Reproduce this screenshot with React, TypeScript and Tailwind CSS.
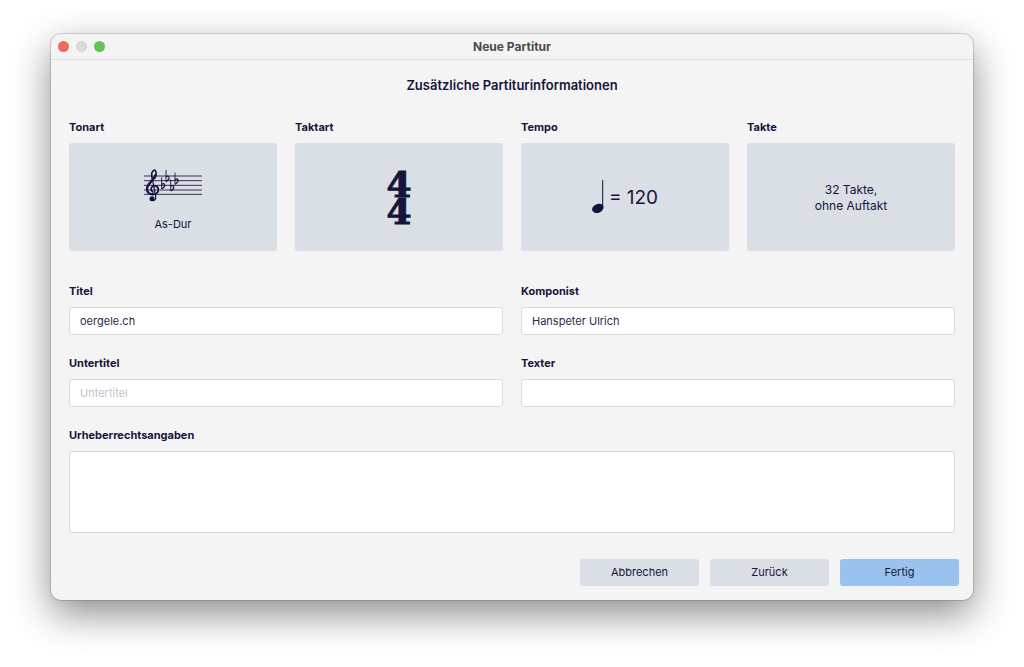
import type { ReactNode } from "react";

function KeySignature() {
  return (
    <svg viewBox="42 42 174 99" className="w-[58px] h-[33px]" aria-hidden="true">
      <g stroke="#26264a" strokeWidth="2.8">
        {[63, 77, 91, 105, 118].map((y) => (
          <line key={y} x1="42" x2="216" y1={y} y2={y} />
        ))}
      </g>
      <g fill="none" stroke="#12123a" strokeLinecap="round">
        <path d="M66 66 L77 124 C79 135 71 139 65 136" strokeWidth="3.6" />
        <path d="M66 68 C63 54 68 47 74 45 C80 49 80 60 74 70" strokeWidth="4.6" />
        <path d="M77 60 C72 77 52 84 51 101 C51 112 59 118 69 118" strokeWidth="7" />
        <path d="M67 118 C80 118 86 111 85 103 C84 92 70 90 65 97 C61 102 64 109 69 111" strokeWidth="5" />
      </g>
      <circle cx="66" cy="131" r="7.5" fill="#12123a" />
      {[
        [95, 93],
        [108, 71],
        [122, 99],
        [135, 79],
      ].map(([x, y]) => (
        <g key={x} transform={`translate(${x} ${y})`} fill="none" stroke="#12123a">
          <path d="M0 -26 V9" strokeWidth="2.6" />
          <path d="M0 -5 C5 -10 11 -6 9 0 C8 4 3 7 0 9" strokeWidth="3.6" />
        </g>
      ))}
    </svg>
  );
}

function QuarterNote() {
  return (
    <svg viewBox="0 0 12 36" className="w-3 h-9" aria-hidden="true">
      <line x1="10.7" x2="10.7" y1="0" y2="27" stroke="#12123a" strokeWidth="1" />
      <ellipse cx="5.8" cy="28.4" rx="5.9" ry="4.4" transform="rotate(-24 5.8 28.4)" fill="#12123a" />
    </svg>
  );
}

interface ScoreOptionProps {
  id: string;
  label: string;
  children: ReactNode;
}

function ScoreOption({ id, label, children }: ScoreOptionProps) {
  return (
    <div className="flex flex-col gap-2 min-w-0">
      <span id={id} className="text-[11px] leading-4 font-bold">{label}</span>
      <button
        type="button"
        aria-describedby={id}
        className="h-[108px] rounded-[3px] bg-[#dadee5] pt-[2px] flex flex-col items-center justify-center"
      >
        {children}
      </button>
    </div>
  );
}

interface TextFieldProps {
  id: string;
  label: string;
  value?: string;
  placeholder?: string;
}

function TextField({ id, label, value, placeholder }: TextFieldProps) {
  return (
    <div className="flex flex-col gap-2 min-w-0">
      <label htmlFor={id} className="text-[11px] leading-4 font-bold">{label}</label>
      <input
        id={id}
        type="text"
        defaultValue={value}
        placeholder={placeholder}
        className="h-7 w-full rounded-[3px] border border-[#dadada] bg-white px-[10px] text-[11px] text-[#2c2c4c] placeholder:text-[#c2c2cc] outline-none"
      />
    </div>
  );
}

export default function App() {
  return (
    <div className="min-h-screen bg-white px-[51px] pt-[34px] pb-16 font-['Inter',sans-serif] text-[#15153a]">
      <main className="rounded-[10px] bg-[#f4f4f4] shadow-[0_0_0_1px_rgba(0,0,0,0.14),0_14px_38px_rgba(0,0,0,0.46)]">
        <header className="h-[26px] grid grid-cols-[1fr_auto_1fr] items-center border-b border-[#dedede] px-[7px]">
          <div className="flex gap-[7px]">
            <button type="button" aria-label="Schließen" className="size-[11px] rounded-full bg-[#ed6a5f]" />
            <button type="button" aria-label="Minimieren" className="size-[11px] rounded-full bg-[#dadada] border border-[#cfcfcf]" />
            <button type="button" aria-label="Zoomen" className="size-[11px] rounded-full bg-[#61c554]" />
          </div>
          <h1 className="text-[12px] leading-4 font-bold text-[#4a4a4a]">Neue Partitur</h1>
        </header>

        <form className="pt-[15px] pb-[14px]">
          <div className="px-[18px]">
            <h2 className="text-center text-[13px] leading-5 font-semibold">Zusätzliche Partiturinformationen</h2>

            <div className="mt-6 grid grid-cols-4 gap-[18px]">
              <ScoreOption id="tonart" label="Tonart">
                <span className="flex flex-col items-center gap-[14px] pt-1">
                  <KeySignature />
                  <span className="text-[11px] leading-4">As-Dur</span>
                </span>
              </ScoreOption>
              <ScoreOption id="taktart" label="Taktart">
                <span className="flex flex-col font-['DejaVu_Serif',serif] text-[36px] leading-[27px] font-bold [-webkit-text-stroke:1px_#15153a]">
                  <span>4</span>
                  <span>4</span>
                </span>
              </ScoreOption>
              <ScoreOption id="tempo" label="Tempo">
                <span className="flex items-center gap-[5px] text-[19px] leading-6">
                  <QuarterNote />
                  <span>= 120</span>
                </span>
              </ScoreOption>
              <ScoreOption id="takte" label="Takte">
                <span className="text-[12px] leading-4">
                  32 Takte,
                  <br />
                  ohne Auftakt
                </span>
              </ScoreOption>
            </div>

            <div className="mt-8 grid grid-cols-2 gap-x-[18px] gap-y-5">
              <TextField id="titel" label="Titel" value="oergele.ch" />
              <TextField id="komponist" label="Komponist" value="Hanspeter Ulrich" />
              <TextField id="untertitel" label="Untertitel" placeholder="Untertitel" />
              <TextField id="texter" label="Texter" />
              <div className="col-span-2 flex flex-col gap-2">
                <label htmlFor="urheberrecht" className="text-[11px] leading-4 font-bold">Urheberrechtsangaben</label>
                <textarea
                  id="urheberrecht"
                  className="h-[82px] w-full resize-none rounded-[3px] border border-[#dadada] bg-white px-[10px] py-2 text-[11px] outline-none"
                />
              </div>
            </div>
          </div>

          <div className="mt-[26px] flex justify-end gap-[11px] px-[14px] text-[11px]">
            <button type="button" className="h-[27px] w-[119px] rounded-[3px] bg-[#dadee5]">Abbrechen</button>
            <button type="button" className="h-[27px] w-[119px] rounded-[3px] bg-[#dadee5]">Zurück</button>
            <button type="button" className="h-[27px] w-[119px] rounded-[3px] bg-[#99c3ee]">Fertig</button>
          </div>
        </form>
      </main>
    </div>
  );
}
